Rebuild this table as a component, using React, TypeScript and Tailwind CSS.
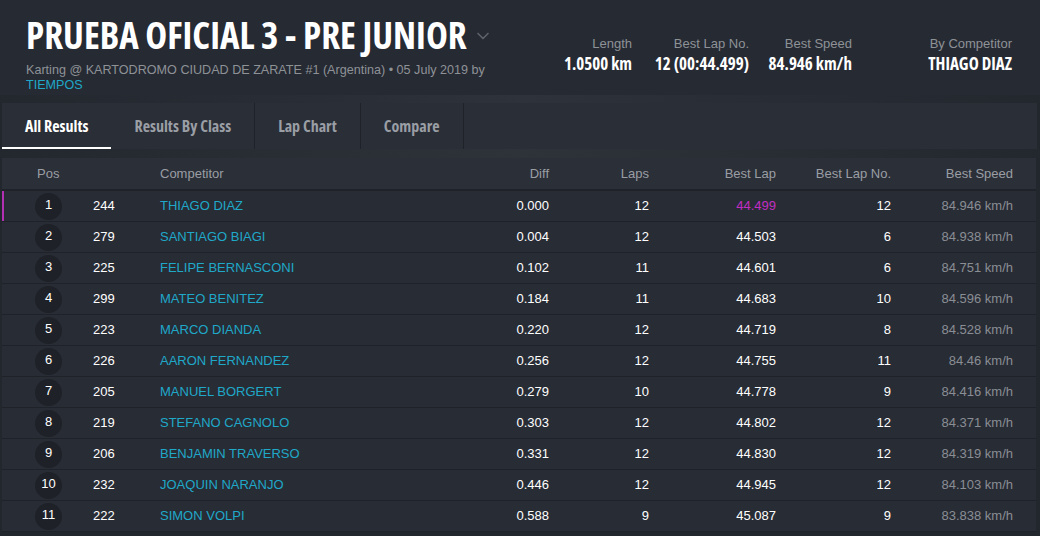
import { ChevronDown } from "lucide-react"

type Row = {
  pos: number
  no: string
  name: string
  diff: string
  laps: number
  best: string
  bestNo: number
  speed: string
}

const rows: Row[] = [
  { pos: 1, no: "244", name: "THIAGO DIAZ", diff: "0.000", laps: 12, best: "44.499", bestNo: 12, speed: "84.946 km/h" },
  { pos: 2, no: "279", name: "SANTIAGO BIAGI", diff: "0.004", laps: 12, best: "44.503", bestNo: 6, speed: "84.938 km/h" },
  { pos: 3, no: "225", name: "FELIPE BERNASCONI", diff: "0.102", laps: 11, best: "44.601", bestNo: 6, speed: "84.751 km/h" },
  { pos: 4, no: "299", name: "MATEO BENITEZ", diff: "0.184", laps: 11, best: "44.683", bestNo: 10, speed: "84.596 km/h" },
  { pos: 5, no: "223", name: "MARCO DIANDA", diff: "0.220", laps: 12, best: "44.719", bestNo: 8, speed: "84.528 km/h" },
  { pos: 6, no: "226", name: "AARON FERNANDEZ", diff: "0.256", laps: 12, best: "44.755", bestNo: 11, speed: "84.46 km/h" },
  { pos: 7, no: "205", name: "MANUEL BORGERT", diff: "0.279", laps: 10, best: "44.778", bestNo: 9, speed: "84.416 km/h" },
  { pos: 8, no: "219", name: "STEFANO CAGNOLO", diff: "0.303", laps: 12, best: "44.802", bestNo: 12, speed: "84.371 km/h" },
  { pos: 9, no: "206", name: "BENJAMIN TRAVERSO", diff: "0.331", laps: 12, best: "44.830", bestNo: 12, speed: "84.319 km/h" },
  { pos: 10, no: "232", name: "JOAQUIN NARANJO", diff: "0.446", laps: 12, best: "44.945", bestNo: 12, speed: "84.103 km/h" },
  { pos: 11, no: "222", name: "SIMON VOLPI", diff: "0.588", laps: 9, best: "45.087", bestNo: 9, speed: "83.838 km/h" },
]

const cond = "font-['Open_Sans','DejaVu_Sans_Condensed',sans-serif] font-stretch-[75%] font-bold"
const cols = "grid grid-cols-[91px_67px_290px_99px_100px_127px_115px_122px]"

function Stat({ label, value, width }: { label: string; value: string; width: string }) {
  return (
    <div className={`flex flex-col items-end ${width}`}>
      <span className="text-[13px] leading-4 text-[#8e9297]">{label}</span>
      <span className={`${cond} text-[17px] leading-6 text-white`}>{value}</span>
    </div>
  )
}

export default function App() {
  const tabs = ["All Results", "Results By Class", "Lap Chart", "Compare"]

  return (
    <div className="w-[1040px] h-[536px] overflow-hidden bg-[#22262d] font-['Liberation_Sans',Arial,sans-serif]">
      {/* Header */}
      <div className="h-[95px] bg-[#262a33] flex justify-between pl-[26px] pr-[28px]">
        <div className="pt-[12px]">
          <div className="flex items-center">
            <h1 className={`${cond} text-[37px] leading-[46px] text-white`}>PRUEBA OFICIAL 3 - PRE JUNIOR</h1>
            <ChevronDown className="w-5 h-5 ml-[6px] mt-[2px] text-[#5c616a]" strokeWidth={2} />
          </div>
          <div className="text-[12.6px] leading-[15px] text-[#8e9297] mt-[5px]">
            Karting @ KARTODROMO CIUDAD DE ZARATE #1 (Argentina) • 05 July 2019 by
            <div className="text-[#1fa8c8]">TIEMPOS</div>
          </div>
        </div>
        <div className="flex items-start pt-[36px]">
          <Stat label="Length" value="1.0500 km" width="w-[80px]" />
          <Stat label="Best Lap No." value="12 (00:44.499)" width="w-[117px]" />
          <Stat label="Best Speed" value="84.946 km/h" width="w-[103px]" />
          <Stat label="By Competitor" value="THIAGO DIAZ" width="w-[160px]" />
        </div>
      </div>

      {/* backdrop strip */}
      <div className="h-[8px] bg-gradient-to-r from-[#23272e] via-[#2d323b] to-[#23272e]" />

      {/* Tabs */}
      <div className="ml-[2px] mr-[3px] h-[46px] bg-[#2a2e37] flex">
        {tabs.map((t, i) => (
          <div
            key={t}
            className={`relative flex items-center px-[23px] ${cond} text-[16px] ${i === 0 ? "text-white" : "text-[#9a9ea5]"} ${i > 0 ? "border-r border-[#1f2329]" : ""}`}
          >
            {t}
            {i === 0 && <div className="absolute left-0 right-0 bottom-0 h-[2px] bg-white" />}
          </div>
        ))}
      </div>

      <div className="h-[9px] bg-gradient-to-r from-[#23272e] via-[#2e3239] to-[#23272e]" />

      {/* Table */}
      <div className="ml-[2px] mr-[4px] bg-[#282c35]">
        <div className={`${cols} h-[33px] items-center bg-[#2b2f38] text-[13px] text-[#9a9ea4] border-b-2 border-[#1f2329]`}>
          <div className="pl-[35px]">Pos</div>
          <div />
          <div>Competitor</div>
          <div className="text-right">Diff</div>
          <div className="text-right">Laps</div>
          <div className="text-right">Best Lap</div>
          <div className="text-right">Best Lap No.</div>
          <div className="text-right">Best Speed</div>
        </div>
        {rows.map((r) => (
          <div
            key={r.pos}
            className={`relative ${cols} h-[31px] items-center text-[13px] text-white border-b border-[#1f2329]`}
          >
            {r.pos === 1 && <div className="absolute left-0 top-0 bottom-0 w-[2px] bg-[#b32fb3]" />}
            <div className="pl-[33px]">
              <div className="w-[27px] h-[27px] rounded-full bg-[#1e2127] flex justify-center pt-[4px] text-[13px] leading-[15px]">
                {r.pos}
              </div>
            </div>
            <div>{r.no}</div>
            <div className="text-[#1fa8c8]">{r.name}</div>
            <div className="text-right">{r.diff}</div>
            <div className="text-right">{r.laps}</div>
            <div className={`text-right ${r.pos === 1 ? "text-[#c12ec1]" : ""}`}>{r.best}</div>
            <div className="text-right">{r.bestNo}</div>
            <div className="text-right text-[#8a8e94]">{r.speed}</div>
          </div>
        ))}
      </div>
    </div>
  )
}
